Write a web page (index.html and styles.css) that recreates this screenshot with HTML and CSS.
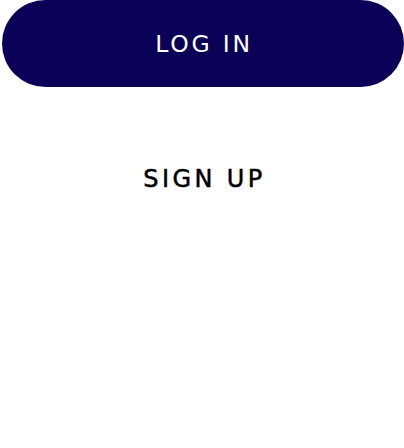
FILE: index.html
```html
<!DOCTYPE html>
<html>
<head>
<meta charset="utf-8">
<link rel="stylesheet" href="styles.css">
</head>
<body>
<div class="actions">
  <button class="btn btn-primary">LOG IN</button>
  <button class="btn btn-link">SIGN UP</button>
</div>
</body>
</html>
```
FILE: styles.css
```css
html, body {
  margin: 0;
  padding: 0;
  background: #fff;
}
.actions {
  display: flex;
  flex-direction: column;
  padding-left: 2px;
  width: 402px;
}
.btn {
  border: none;
  font-family: "DejaVu Sans", sans-serif;
  font-size: 23.5px;
  font-weight: 400;
  letter-spacing: 2.8px;
  height: 87px;
  display: flex;
  align-items: center;
  justify-content: center;
  padding: 0 0 0 2px;
  cursor: pointer;
}
.btn-primary {
  background: #0b0057;
  color: #fff;
  border-radius: 44px;
}
.btn-link {
  background: transparent;
  color: #000;
  margin-top: 48px;
  height: 87px;
  font-size: 24px;
  letter-spacing: 3.4px;
  padding-left: 3px;
  -webkit-text-stroke: 0.5px #000;
}
```
